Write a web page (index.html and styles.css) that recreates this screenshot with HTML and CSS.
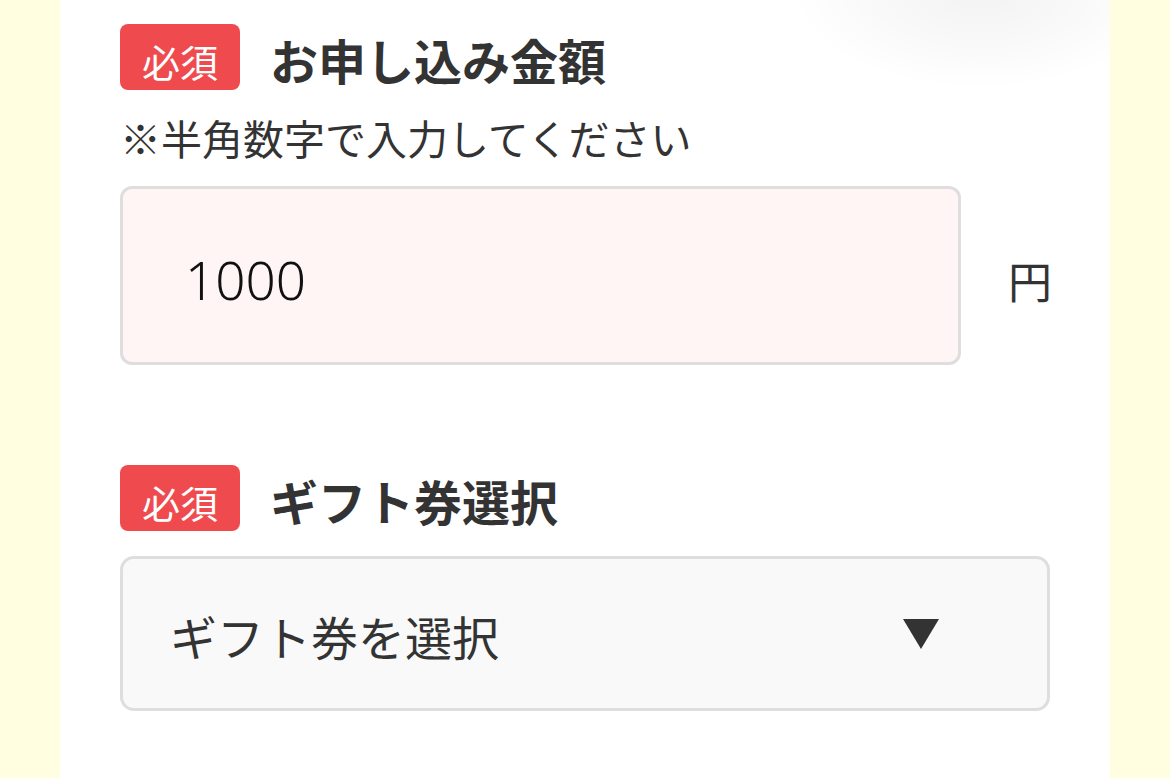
FILE: index.html
```html
<!DOCTYPE html>
<html lang="ja">
<head>
<meta charset="utf-8">
<title>お申し込み</title>
<link rel="stylesheet" href="styles.css">
</head>
<body>
<div class="page">
  <main class="panel">
    <section class="field">
      <div class="label-row">
        <span class="badge">必須</span>
        <h2 class="label">お申し込み金額</h2>
      </div>
      <p class="note">※半角数字で入力してください</p>
      <div class="amount-row">
        <div class="amount-input">1000</div>
        <span class="unit">円</span>
      </div>
    </section>
    <section class="field field-gift">
      <div class="label-row">
        <span class="badge">必須</span>
        <h2 class="label">ギフト券選択</h2>
      </div>
      <div class="select">
        <span class="select-text">ギフト券を選択</span>
        <svg class="select-arrow" width="36" height="30" viewBox="0 0 36 30"><polygon points="0,0 36,0 18,30" fill="#333"/></svg>
      </div>
    </section>
  </main>
</div>
</body>
</html>
```

FILE: styles.css
```css
* { box-sizing: border-box; }
html, body { margin: 0; padding: 0; }
body {
  background: #fffee1;
  font-family: "Noto Sans CJK JP", "Noto Sans", sans-serif;
  color: #333;
  width: 1170px;
  height: 778px;
  overflow: hidden;
}
.page {
  height: 778px;
  padding: 0 60px;
}
.panel {
  position: relative;
  background: #fff;
  height: 100%;
  padding: 24px 60px 0 60px;
  overflow: hidden;
}
.panel::before {
  content: "";
  position: absolute;
  right: -60px;
  top: -110px;
  width: 380px;
  height: 200px;
  background: radial-gradient(ellipse at center, rgba(0,0,0,0.05) 0%, rgba(0,0,0,0.02) 45%, rgba(0,0,0,0) 70%);
  pointer-events: none;
}
.label-row {
  display: flex;
  align-items: center;
  gap: 30px;
}
.badge {
  display: flex;
  align-items: center;
  justify-content: center;
  width: 120px;
  height: 66px;
  border-radius: 8px;
  background: #ef4b4f;
  color: #fff;
  font-size: 38px;
  line-height: 1;
  padding-top: 8px;
}
.label {
  margin: 0;
  font-size: 48px;
  font-weight: 700;
  line-height: 1;
  color: #333;
  padding-top: 4px;
}
.note {
  margin: 23px 0 0 0;
  font-size: 41px;
  line-height: 48px;
  color: #333;
}
.amount-row {
  margin-top: 25px;
  display: flex;
  align-items: center;
  gap: 47px;
}
.amount-input {
  flex-shrink: 0;
  width: 841px;
  height: 179px;
  border: 3px solid #dedede;
  border-radius: 12px;
  background: #fff5f4;
  display: flex;
  align-items: center;
  padding-left: 62px;
  padding-top: 8px;
  font-family: "Noto Sans", sans-serif;
  font-weight: 300;
  font-size: 53px;
  color: #111;
}
.unit {
  flex-shrink: 0;
  font-size: 44px;
  line-height: 1;
  padding-top: 8px;
  color: #333;
}
.field-gift {
  margin-top: 100px;
}
.select {
  margin-top: 25px;
  width: 930px;
  height: 155px;
  border: 3px solid #dedede;
  border-radius: 14px;
  background: #f9f9f9;
  display: flex;
  align-items: center;
  justify-content: space-between;
  padding: 4px 108px 0 47px;
}
.select-text {
  font-size: 47px;
  line-height: 1;
  color: #333;
}
.select-arrow {
  display: block;
  margin-top: -4px;
}
```
